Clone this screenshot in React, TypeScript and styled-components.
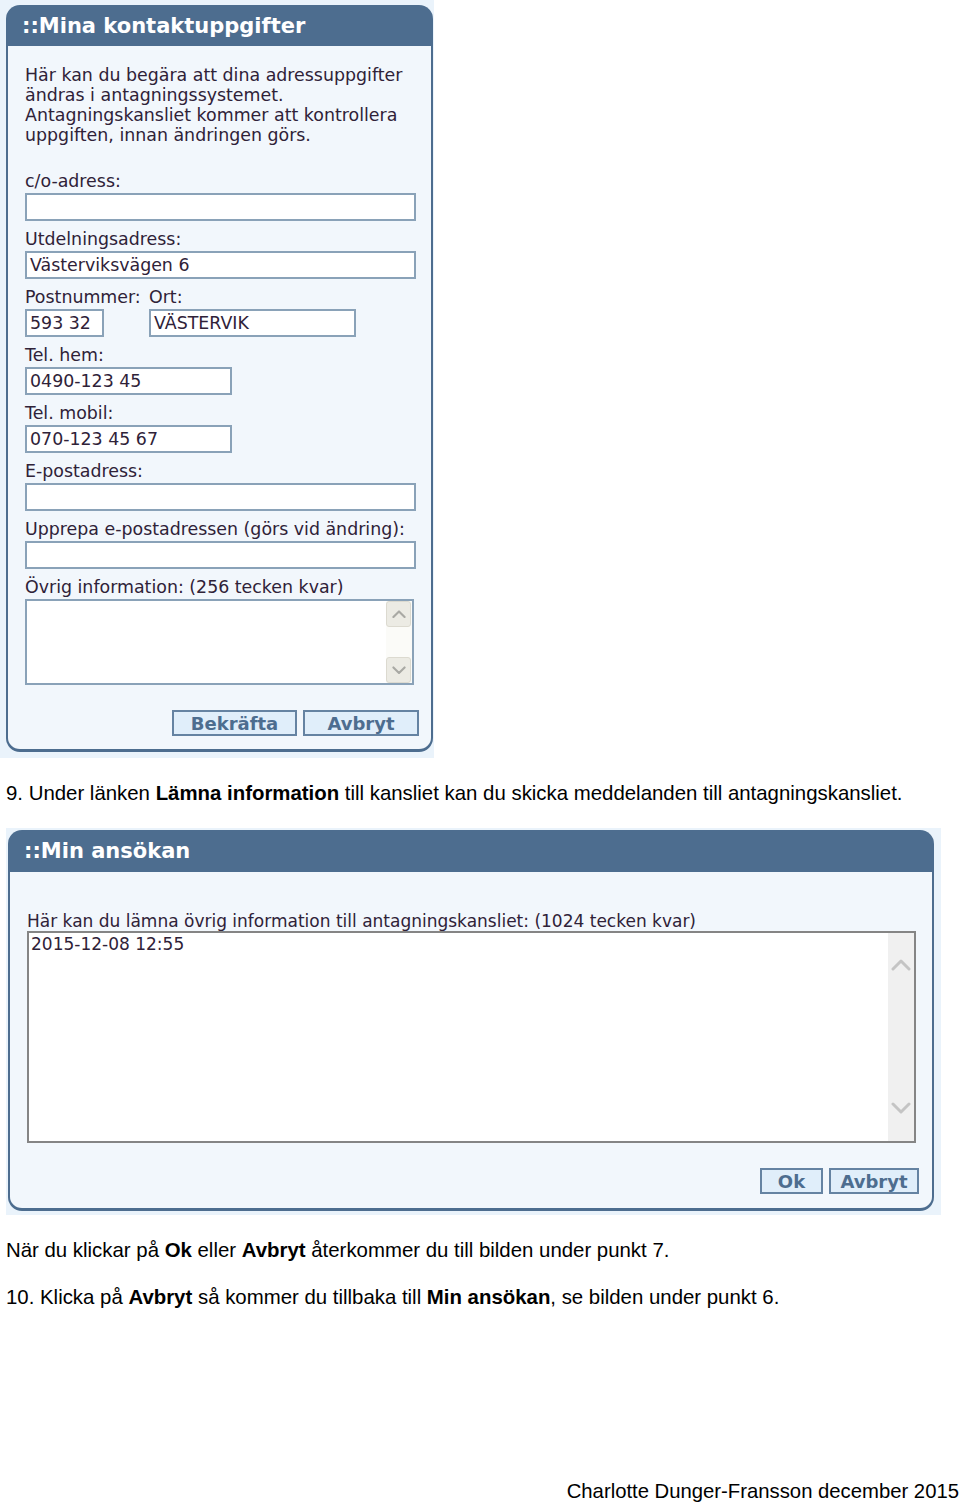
import React from 'react';
import styled, { createGlobalStyle } from 'styled-components';

const blue = '#4d6d8f';
const ink = '#2f2238';

const GlobalStyle = createGlobalStyle`
    body {
        margin: 0;
        background: #ffffff;
        font-family: "Liberation Sans", Arial, sans-serif;
    }
`;

const Page = styled.div`
    width: 960px;
    height: 1504px;
    background: #ffffff;
    overflow: hidden;
`;

const Shot = styled.div<{ $pad: string; $width: number; $left: number }>`
    width: ${p => p.$width}px;
    padding: ${p => p.$pad};
    background: #eaf3fb;
    box-sizing: border-box;
    margin-left: ${p => p.$left}px;
`;

const Panel = styled.div<{ $fs: number }>`
    display: flex;
    flex-direction: column;
    font-family: "DejaVu Sans", Verdana, sans-serif;
    font-size: ${p => p.$fs}px;
    color: ${ink};
`;

const Header = styled.div<{ $h: number }>`
    height: ${p => p.$h}px;
    background: ${blue};
    border-radius: 14px 14px 0 0;
    display: flex;
    align-items: center;
    padding-left: 16px;
    color: #ffffff;
    font-weight: bold;
    font-size: 21px;
`;

const Body = styled.div<{ $pad: string }>`
    background: #f2f7fc;
    border: 2px solid ${blue};
    border-top: none;
    border-bottom-width: 3px;
    border-radius: 0 0 14px 14px;
    padding: ${p => p.$pad};
    display: flex;
    flex-direction: column;
`;

const Intro = styled.div`
    line-height: 20px;
    margin-bottom: 26px;
    white-space: nowrap;
`;

const Field = styled.div`
    display: flex;
    flex-direction: column;
    margin-bottom: 8px;
`;

const Label = styled.div<{ $mb?: number }>`
    line-height: 20px;
    height: 20px;
    margin-bottom: ${p => p.$mb ?? 2}px;
    white-space: nowrap;
`;

const Input = styled.div<{ $w: number }>`
    width: ${p => p.$w}px;
    height: 28px;
    box-sizing: border-box;
    background: #ffffff;
    border: 2px solid #8aa2b8;
    line-height: 24px;
    padding-left: 3px;
    white-space: nowrap;
`;

const Pair = styled.div`
    display: flex;
`;

const Col = styled.div<{ $w?: number }>`
    display: flex;
    flex-direction: column;
    width: ${p => (p.$w ? `${p.$w}px` : 'auto')};
    margin-bottom: 8px;
`;

const TextArea = styled.div<{ $w: number; $h: number; $border: string }>`
    width: ${p => p.$w}px;
    height: ${p => p.$h}px;
    box-sizing: border-box;
    background: #ffffff;
    border: 2px solid ${p => p.$border};
    display: flex;
    line-height: 20px;
`;

const AreaText = styled.div`
    flex: 1;
    padding: 1px 2px;
`;

const XpScroll = styled.div`
    width: 25px;
    display: flex;
    flex-direction: column;
    justify-content: space-between;
    background: #fbfbf8;
    padding: 0 1px 0 0;
`;

const XpButton = styled.div`
    height: 24px;
    border: 1px solid #dcdad0;
    border-radius: 3px;
    background: #ecebe4;
    display: flex;
    align-items: center;
    justify-content: center;
`;

const FlatScroll = styled.div`
    width: 26px;
    background: #f0f0f0;
    display: flex;
    flex-direction: column;
    justify-content: space-between;
    align-items: center;
    padding: 26px 0 27px 0;
`;

const Buttons = styled.div<{ $mt: number; $mr: number }>`
    display: flex;
    justify-content: flex-end;
    gap: 6px;
    margin-top: ${p => p.$mt}px;
    margin-right: ${p => p.$mr}px;
`;

const Button = styled.div<{ $w: number }>`
    width: ${p => p.$w}px;
    height: 26px;
    box-sizing: border-box;
    border: 2px solid #6583a2;
    background: #e0eefa;
    color: ${blue};
    font-weight: bold;
    font-size: 18px;
    display: flex;
    align-items: center;
    justify-content: center;
`;

const Caption = styled.p`
    margin: 23px 0;
    padding-left: 6px;
    font-size: 20.4px;
    line-height: 24px;
    color: #000000;
    white-space: nowrap;
`;

const Footer = styled.p`
    margin: 170px 1px 0 0;
    text-align: right;
    font-size: 20.3px;
    line-height: 24px;
    color: #000000;
`;

const Chevron = ({ up, size, color, width }: { up: boolean; size: number; color: string; width: number }) => (
    <svg width={size} height={size * 0.6} viewBox="0 0 20 12">
        <polyline
            points={up ? '2,10 10,2 18,10' : '2,2 10,10 18,2'}
            fill="none"
            stroke={color}
            strokeWidth={width}
            strokeLinecap="round"
            strokeLinejoin="round"
        />
    </svg>
);

function App() {
    return (
        <Page>
            <GlobalStyle />
            <Shot $width={434} $left={0} $pad="5px 1px 6px 6px">
                <Panel $fs={17.4}>
                    <Header $h={41}>::Mina kontaktuppgifter</Header>
                    <Body $pad="19px 15px 13px 17px">
                        <Intro>
                            Här kan du begära att dina adressuppgifter<br />
                            ändras i antagningssystemet.<br />
                            Antagningskansliet kommer att kontrollera<br />
                            uppgiften, innan ändringen görs.
                        </Intro>
                        <Field>
                            <Label>c/o-adress:</Label>
                            <Input $w={391} />
                        </Field>
                        <Field>
                            <Label>Utdelningsadress:</Label>
                            <Input $w={391}>Västerviksvägen 6</Input>
                        </Field>
                        <Pair>
                            <Col $w={124}>
                                <Label>Postnummer:</Label>
                                <Input $w={79}>593 32</Input>
                            </Col>
                            <Col>
                                <Label>Ort:</Label>
                                <Input $w={207}>VÄSTERVIK</Input>
                            </Col>
                        </Pair>
                        <Field>
                            <Label>Tel. hem:</Label>
                            <Input $w={207}>0490-123 45</Input>
                        </Field>
                        <Field>
                            <Label>Tel. mobil:</Label>
                            <Input $w={207}>070-123 45 67</Input>
                        </Field>
                        <Field>
                            <Label>E-postadress:</Label>
                            <Input $w={391} />
                        </Field>
                        <Field>
                            <Label>Upprepa e-postadressen (görs vid ändring):</Label>
                            <Input $w={391} />
                        </Field>
                        <Field>
                            <Label>Övrig information: (256 tecken kvar)</Label>
                            <TextArea $w={389} $h={86} $border="#8aa2b8">
                                <AreaText />
                                <XpScroll>
                                    <XpButton>
                                        <Chevron up size={14} color="#a9a9a4" width={3} />
                                    </XpButton>
                                    <XpButton>
                                        <Chevron up={false} size={14} color="#a9a9a4" width={3} />
                                    </XpButton>
                                </XpScroll>
                            </TextArea>
                        </Field>
                        <Buttons $mt={17} $mr={-3}>
                            <Button $w={125}>Bekräfta</Button>
                            <Button $w={116}>Avbryt</Button>
                        </Buttons>
                    </Body>
                </Panel>
            </Shot>

            <Caption>
                9. Under länken <b>Lämna information</b> till kansliet kan du skicka meddelanden till antagningskansliet.
            </Caption>

            <Shot $width={935} $left={6} $pad="2px 7px 4px 2px">
                <Panel $fs={17}>
                    <Header $h={42}>::Min ansökan</Header>
                    <Body $pad="39px 16px 14px 17px">
                        <Label $mb={0}>Här kan du lämna övrig information till antagningskansliet: (1024 tecken kvar)</Label>
                        <TextArea $w={889} $h={212} $border="#858585">
                            <AreaText>2015-12-08 12:55</AreaText>
                            <FlatScroll>
                                <Chevron up size={20} color="#c4c4c4" width={3} />
                                <Chevron up={false} size={20} color="#c4c4c4" width={3} />
                            </FlatScroll>
                        </TextArea>
                        <Buttons $mt={25} $mr={-3}>
                            <Button $w={63}>Ok</Button>
                            <Button $w={90}>Avbryt</Button>
                        </Buttons>
                    </Body>
                </Panel>
            </Shot>

            <Caption>
                När du klickar på <b>Ok</b> eller <b>Avbryt</b> återkommer du till bilden under punkt 7.
            </Caption>
            <Caption>
                10. Klicka på <b>Avbryt</b> så kommer du tillbaka till <b>Min ansökan</b>, se bilden under punkt 6.
            </Caption>
            <Footer>Charlotte Dunger-Fransson december 2015</Footer>
        </Page>
    );
}

export default App;
